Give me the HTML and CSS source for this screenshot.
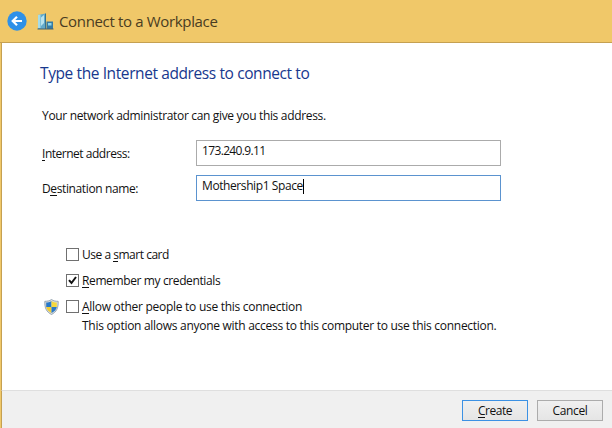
FILE: index.html
```html
<!DOCTYPE html>
<html lang="en">
<head>
<meta charset="utf-8">
<title>Connect to a Workplace</title>
<link rel="stylesheet" href="styles.css">
</head>
<body>
<div class="window">
  <header class="titlebar">
    <svg class="back" viewBox="0 0 20 20" width="20" height="20"><circle cx="10" cy="10" r="9.7" fill="#2f91e8"/><path d="M15 10H6M10 5.7L5.7 10L10 14.3" fill="none" stroke="#fff" stroke-width="2.2"/></svg>
    <svg class="building" viewBox="0 0 17 17" width="17" height="17">
      <path d="M1 2L8.5 .5V16H1Z" fill="#62aacb"/>
      <path d="M1 2L3.5 1.5V15H1Z" fill="#a5dce9"/>
      <path d="M4 4.5L7 2V10L4 13Z" fill="#b9e3ed"/>
      <path d="M8.5 .5V16" stroke="#36718c"/>
      <path d="M9.5 8.5H16V16H9.5Z" fill="#347ba5"/>
      <path d="M11 10H14.5V12.5H11Z" fill="#8ed6ea"/>
      <path d="M.5 16H16.5" stroke="#47616b"/>
    </svg>
    <h1 class="title">Connect to a Workplace</h1>
  </header>
  <main class="page">
    <h2 class="heading">Type the Internet address to connect to</h2>
    <p class="intro">Your network administrator can give you this address.</p>
    <div class="field"><span class="label"><span class="l1"><u>I</u>nternet address:</span></span><div class="input"><span class="v1">173.240.9.11</span></div></div>
    <div class="field"><span class="label"><span class="l2">D<u>e</u>stination name:</span></span><div class="input focused"><span class="v2">Mothership1 Space</span><i class="caret"></i></div></div>
    <div class="options">
      <div class="option"><span class="shield"></span><span class="box"></span><span class="o1">Use a <u>s</u>mart card</span></div>
      <div class="option"><span class="shield"></span><span class="box"><svg viewBox="0 0 11 11" width="11" height="11"><path d="M2 5.2L4.5 8L9 2" fill="none" stroke="#111" stroke-width="2"/></svg></span><span class="o2"><u>R</u>emember my credentials</span></div>
      <div class="option"><span class="shield"><svg viewBox="0 0 15 16" width="15" height="16">
        <path d="M7.5 .5C5.5 2 3 2.3 .8 2.3C.5 9 2.5 13 7.5 15.5C12.5 13 14.5 9 14.2 2.3C12 2.3 9.5 2 7.5 .5Z" fill="#d5dade" stroke="#8797a5" stroke-width=".8"/>
        <path d="M7.5 2C6 3 4 3.5 2.2 3.6V8H7.5Z" fill="#2878c8"/>
        <path d="M7.5 2C9 3 11 3.5 12.8 3.6V8H7.5Z" fill="#f4d83e"/>
        <path d="M2.2 8H7.5V14C4.5 12.5 2.8 10.5 2.2 8Z" fill="#f0cd32"/>
        <path d="M12.8 8H7.5V14C10.5 12.5 12.2 10.5 12.8 8Z" fill="#2878c8"/></svg></span><span class="box"></span><span class="o3"><u>A</u>llow other people to use this connection</span></div>
      <p class="note">This option allows anyone with access to this computer to use this connection.</p>
    </div>
  </main>
  <footer class="footer">
    <div class="button primary"><span class="b1"><u>C</u>reate</span></div>
    <div class="button"><span class="b2">Cancel</span></div>
  </footer>
</div>
</body>
</html>
```
FILE: styles.css
```css
* { box-sizing: border-box; }
body { margin: 0; font: 12px/16px "Open Sans", "Noto Sans", sans-serif; color: #111; }
h1, h2, p { margin: 0; font-weight: 400; white-space: nowrap; }
span { white-space: nowrap; }
u { text-decoration: none; box-shadow: inset 0 -1px 0 #111; display: inline-block; line-height: 15px; height: 15px; }
svg { display: block; }
.window { width: 612px; height: 428px; background: #f0c869; display: flex; flex-direction: column; overflow: hidden; }
.titlebar { height: 43px; flex: none; display: flex; align-items: center; padding-left: 7px; border-bottom: 1px solid #c5a051; }
.building { margin-left: 10px; }
.title { margin-left: 5px; font-size: 15px; line-height: 20px; color: #493c22; letter-spacing: -.34px; }
.page { flex: 1; margin-left: 1px; border-left: 1px solid #c5a051; background: #fff; padding: 19px 0 0 40px; }
.heading { margin-left: -2px; font-size: 15.5px; line-height: 22px; color: #17388e; letter-spacing: -.4px; }
.intro { margin: 24px 0 16px; letter-spacing: -.33px; }
.field { display: flex; height: 26px; margin-bottom: 9px; }
.label { width: 154px; padding-top: 6px; }
.input { width: 305px; height: 26px; border: 1px solid #ababab; padding: 2px 0 0 5px; display: flex; }
.focused { border-color: #5b93cf; }
.l1 { letter-spacing: -.48px; }
.l2 { letter-spacing: -.38px; }
.v1 { letter-spacing: -.65px; }
.v2 { letter-spacing: -.41px; }
.caret { width: 1px; height: 15px; margin-top: 1px; background: #000; }
.options { margin: 44px 0 0 2px; }
.option { display: flex; align-items: center; height: 20px; margin-bottom: 6px; }
.shield { width: 22px; }
.box { width: 13px; height: 13px; border: 1px solid #707070; margin: -2px 3px 0 0; }
.o1 { letter-spacing: -.48px; }
.o2 { letter-spacing: -.38px; }
.o3 { letter-spacing: -.28px; }
.note { margin: -5px 0 0 38px; letter-spacing: -.285px; }
.footer { height: 38px; flex: none; margin-left: 1px; border-left: 1px solid #c5a051; border-top: 1px solid #dfdfdf; background: #f0f0f0; display: flex; justify-content: flex-end; gap: 9px; padding: 9px 9px 0 0; }
.button { width: 66px; height: 21px; border: 1px solid #acacac; background: linear-gradient(#f0f0f0, #e5e5e5); display: flex; align-items: center; justify-content: center; }
.primary { border-color: #3c91e4; }
.b1 { letter-spacing: -.45px; }
.b2 { letter-spacing: -.35px; }
```
